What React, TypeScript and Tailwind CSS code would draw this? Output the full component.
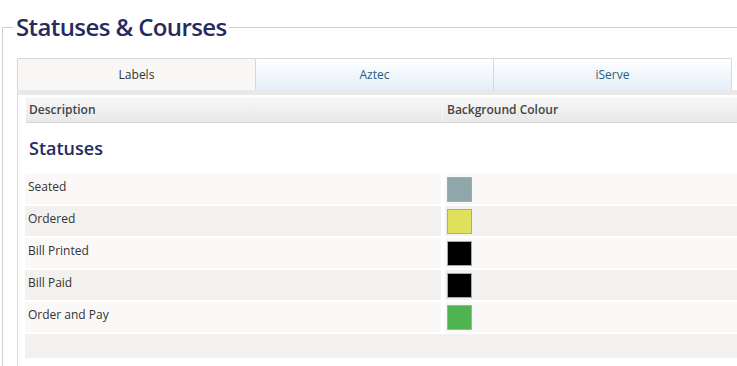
import React from 'react'

const rows = [
  { label: 'Seated', colour: '#8fa7aa' },
  { label: 'Ordered', colour: '#dfe05c' },
  { label: 'Bill Printed', colour: '#000000' },
  { label: 'Bill Paid', colour: '#000000' },
  { label: 'Order and Pay', colour: '#4fb352' },
]

const tabs = ['Labels', 'Aztec', 'iServe']

export default function App() {
  return (
    <div className="w-[737px] h-[366px] overflow-hidden bg-white pt-[11px] text-[#333] font-['Open_Sans',sans-serif]">
      <fieldset className="ml-[2px] w-[760px] min-h-[440px] border-l border-t border-[#cfcfcf]">
        <legend className="ml-[11px] px-[2px] h-[32px] leading-[32px] text-[24px] font-semibold tracking-[-0.6px] text-[#262a5e]">
          Statuses &amp; Courses
        </legend>

        <div className="ml-[14px] mt-[15px] min-h-[400px] border-l border-[#dcdcdc]">
          {/* Tabs */}
          <div className="flex w-[717px] -ml-px">
            {tabs.map((t, i) => (
              <div
                key={t}
                className={`w-[239px] h-[32px] flex items-center justify-center text-[12px] border border-b-0 border-[#d8d8d8] rounded-t-[2px] ${
                  i === 0
                    ? 'bg-[#f8f7f5] text-[#333]'
                    : 'bg-gradient-to-b from-white to-[#e3eef8] text-[#2a5f80]'
                } ${i > 0 ? '-ml-px' : ''}`}
              >
                {t}
              </div>
            ))}
          </div>
          <div className="h-[6px] bg-[#e9e9e9] border-b border-white" />

          {/* Table */}
          <div className="pl-[8px]">
            <div className="flex h-[26px] mt-[1px] bg-gradient-to-b from-[#f8f8f8] to-[#e8e8e8] border-b border-[#dadada] text-[12px] font-semibold text-[#444]">
              <div className="w-[417px] pl-[3px] flex items-center border-r border-[#f8f8f8]">Description</div>
              <div className="flex-1 pl-[4px] flex items-center">Background Colour</div>
            </div>

            <h2 className="mt-[13px] ml-[3px] text-[18px] leading-[24px] font-semibold text-[#262a5e]">Statuses</h2>

            <div className="mt-[14px] flex flex-col gap-[2px] -ml-[1px]">
              {rows.map((r, i) => (
                <div key={r.label} className="flex gap-[4px] h-[30px]">
                  <div className={`w-[416px] pl-[3px] pt-[4px] text-[12px] ${i % 2 ? 'bg-[#f2f1f0]' : 'bg-[#faf9f8]'}`}>
                    {r.label}
                  </div>
                  <div className={`flex-1 pt-[3px] pl-[2px] ${i % 2 ? 'bg-[#f2f1f0]' : 'bg-[#faf9f8]'}`}>
                    <div className="w-[25px] h-[25px] border border-[#a9a9a9]" style={{ backgroundColor: r.colour }} />
                  </div>
                </div>
              ))}
              <div className="h-[24px] bg-[#f2f1f0]" />
            </div>
          </div>
        </div>
      </fieldset>
    </div>
  )
}
